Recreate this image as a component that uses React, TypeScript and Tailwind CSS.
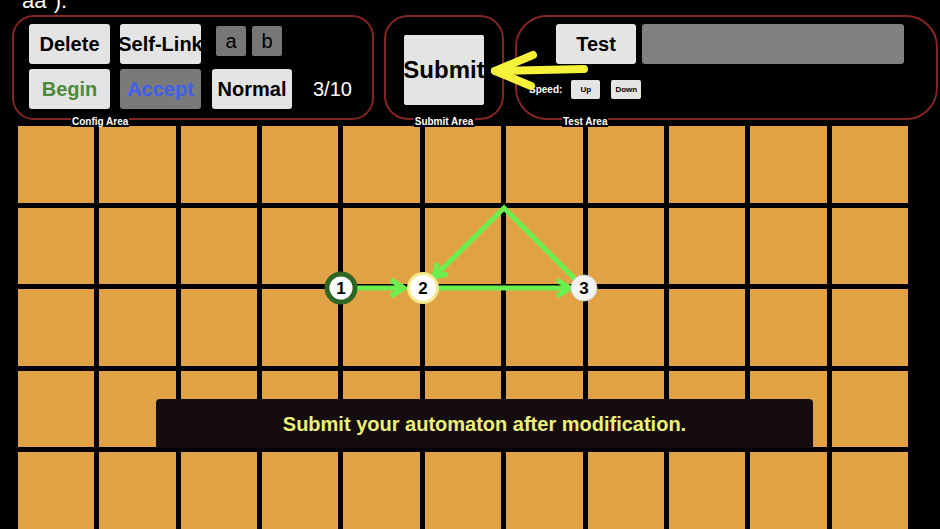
import React from "react";

const btn =
  "flex items-center justify-center bg-[#e4e4e4] rounded-[3px] font-bold text-[20px] whitespace-nowrap leading-none";

function Graph() {
  const g = "#6cf04e";
  return (
    <svg
      className="absolute left-0 top-0 pointer-events-none"
      width={940}
      height={529}
      viewBox="0 0 940 529"
    >
      {/* yellow pointer arrow */}
      <g stroke="#f6f23a" strokeWidth={8} strokeLinecap="round" strokeLinejoin="round" fill="none">
        <line x1={584} y1={69} x2={495} y2={71} />
        <polyline points="533,55 495,71 531,86" />
      </g>
      {/* edges */}
      <g stroke={g} strokeWidth={5} fill="none" strokeLinejoin="miter" strokeLinecap="butt">
        <line x1={356} y1={288} x2={403} y2={288} />
        <polyline points="391,280 404,288 391,296" />
        <line x1={438} y1={288} x2={569} y2={288} />
        <polyline points="557,280 570,288 557,296" />
        <polyline points="575,279 504,208 435,276" />
        <polyline points="437,263 434,277 448,274" />
      </g>
      {/* nodes */}
      <circle cx={341} cy={288} r={14} fill="#fff" stroke="#2e6624" strokeWidth={5} />
      <circle cx={423} cy={288} r={14.5} fill="#fff" stroke="#f2ea8a" strokeWidth={3} />
      <circle cx={584} cy={288} r={13} fill="#f5f5f5" stroke="#cfcfcf" strokeWidth={1} />
      <g fontFamily="'Liberation Sans', Arial, sans-serif" fontWeight="bold" fontSize={17} fill="#000" textAnchor="middle">
        <text x={341} y={294}>1</text>
        <text x={423} y={294}>2</text>
        <text x={584} y={294}>3</text>
      </g>
    </svg>
  );
}

export default function App() {
  const cells = Array.from({ length: 55 });
  return (
    <div className="relative w-[940px] h-[529px] overflow-hidden bg-black font-['Liberation_Sans',Arial,sans-serif]">
      <div className="h-[15px] overflow-hidden pl-[22px]">
        <p className="text-white text-[22px] leading-none -mt-[10px]">aa”).</p>
      </div>

      <div className="flex h-[105px]">
        {/* Config Area */}
        <div className="relative ml-[12px] w-[362px] border-2 border-[#842525] rounded-[22px] pl-[15px] pt-[7px]">
          <div className="flex items-start">
            <div className={`${btn} w-[81px] h-[40px] text-black`}>Delete</div>
            <div className={`${btn} ml-[10px] w-[81px] h-[40px] text-black`}>Self-Link</div>
            <div className="ml-[15px] mt-[2px] w-[30px] h-[30px] bg-[#777777] rounded-[2px] flex items-center justify-center text-[20px] text-black leading-none">
              a
            </div>
            <div className="ml-[6px] mt-[2px] w-[30px] h-[30px] bg-[#777777] rounded-[2px] flex items-center justify-center text-[20px] text-black leading-none">
              b
            </div>
          </div>
          <div className="flex items-center mt-[5px]">
            <div className={`${btn} w-[81px] h-[40px] text-[#4c8a3c]`}>Begin</div>
            <div className="ml-[10px] w-[81px] h-[40px] rounded-[3px] bg-[#7a7a7a] flex items-center justify-center font-bold text-[20px] text-[#3f60ec] leading-none">
              Accept
            </div>
            <div className={`${btn} ml-[11px] w-[80px] h-[40px] text-black`}>Normal</div>
            <div className="ml-[21px] text-[20px] text-white leading-none">3/10</div>
          </div>
          <div className="absolute left-[57px] bottom-[-9px] bg-black px-[1px] text-[10px] font-bold text-white leading-none">
            Config Area
          </div>
        </div>

        {/* Submit Area */}
        <div className="relative ml-[10px] w-[120px] border-2 border-[#842525] rounded-[24px] pl-[18px] pt-[18px]">
          <div className="w-[80px] h-[70px] bg-[#e4e4e4] rounded-[2px] flex items-center justify-center font-bold text-[24px] text-black whitespace-nowrap leading-none">
            Submit
          </div>
          <div className="absolute left-1/2 -translate-x-1/2 bottom-[-9px] bg-black px-[1px] text-[10px] font-bold text-white leading-none whitespace-nowrap">
            Submit Area
          </div>
        </div>

        {/* Test Area */}
        <div className="relative ml-[11px] w-[423px] border-2 border-[#842525] rounded-[32px] pl-[12px] pt-[7px]">
          <div className="flex ml-[27px]">
            <div className={`${btn} w-[80px] h-[40px] text-black`}>Test</div>
            <div className="ml-[6px] w-[262px] h-[40px] bg-[#808080] rounded-[3px]" />
          </div>
          <div className="flex items-center mt-[16px]">
            <span className="text-[10px] font-bold text-white leading-none">Speed:</span>
            <div className="ml-[9px] w-[29px] h-[19px] bg-[#e4e4e4] rounded-[2px] flex items-center justify-center text-[8px] font-bold text-black leading-none">
              Up
            </div>
            <div className="ml-[11px] w-[30px] h-[19px] bg-[#e4e4e4] rounded-[2px] flex items-center justify-center text-[8px] font-bold text-black leading-none">
              Down
            </div>
          </div>
          <div className="absolute left-[45px] bottom-[-9px] bg-black px-[1px] text-[10px] font-bold text-white leading-none">
            Test Area
          </div>
        </div>
      </div>

      {/* Grid */}
      <div className="ml-[18px] mt-[6px] grid grid-cols-11 gap-x-[5px] gap-y-[5px] w-[890px]">
        {cells.map((_, i) => (
          <div key={i} className="h-[76.5px] bg-[#e0a245]" />
        ))}
      </div>

      <Graph />

      <div className="absolute left-[156px] top-[399px] w-[657px] h-[49px] bg-[#150d0d] rounded-t-[4px] flex items-center justify-center text-[20px] font-bold text-[#eef07a] leading-none">
        Submit your automaton after modification.
      </div>
    </div>
  );
}
